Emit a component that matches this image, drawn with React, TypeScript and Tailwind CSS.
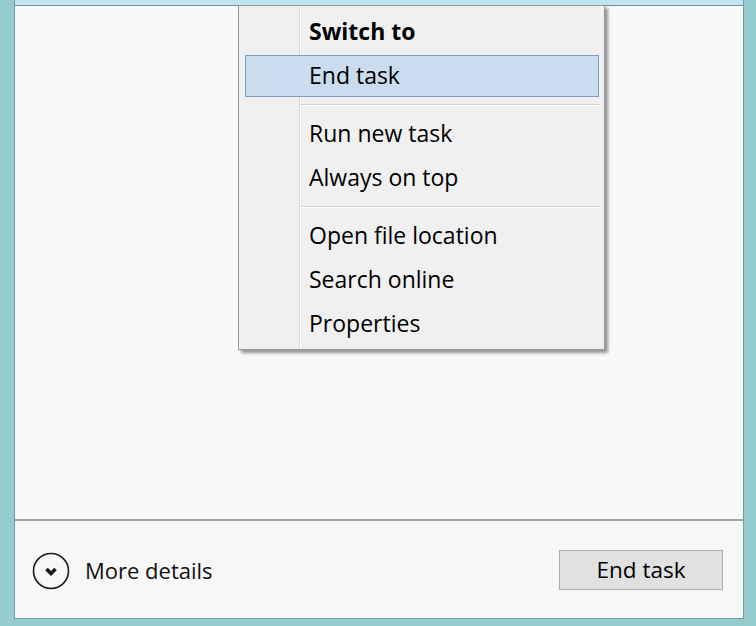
import React from 'react';

const font = { fontFamily: '"Open Sans", "Noto Sans", sans-serif' };

type Item = { label: string; bold?: boolean; active?: boolean } | 'sep';

const menu: Item[] = [
  { label: 'Switch to', bold: true },
  { label: 'End task', active: true },
  'sep',
  { label: 'Run new task' },
  { label: 'Always on top' },
  'sep',
  { label: 'Open file location' },
  { label: 'Search online' },
  { label: 'Properties' },
];

function ContextMenu() {
  return (
    <div className="absolute left-[238px] top-[5px] w-[367px] border border-[#979797] bg-[#f0f0f0] pt-[3px] pb-[4px] shadow-[3px_3px_3px_rgba(0,0,0,0.4)]">
      {/* gutter line */}
      <div className="absolute left-[60px] top-0 bottom-0 w-px bg-[#dadada]" />
      <div className="absolute left-[61px] top-0 bottom-0 w-px bg-white" />
      {menu.map((item, i) =>
        item === 'sep' ? (
          <div key={i} className="h-[14px] pt-[7px] pl-[61px] pr-[4px]">
            <div className="h-px bg-[#d4d4d4]" />
            <div className="h-px bg-white" />
          </div>
        ) : (
          <div key={i} className="relative h-[44px]">
            {item.active && (
              <div className="absolute left-[6px] right-[5px] top-[2px] bottom-0 border border-[#7d9ec2] bg-[#cbdcee]" />
            )}
            <div
              className={`relative flex h-full items-center pl-[70px] text-[23px] text-black ${
                item.bold ? 'font-bold' : ''
              }`}
            >
              {item.label}
            </div>
          </div>
        )
      )}
    </div>
  );
}

export default function App() {
  return (
    <div
      className="relative flex h-[626px] w-[756px] bg-[#95cdcf] pl-[14px] pr-[12px] pb-[7px]"
      style={font}
    >
      <div className="flex flex-1 flex-col border-x border-b border-[#6f9ca2] bg-[#f9f9f9]">
        <div className="h-[5px] bg-[#c2e6ef]" />
        <div className="h-px bg-[#6f93a0]" />
        <div className="flex-1" />
        <div className="h-[2px] bg-[#a3a3a3]" />
        <div className="flex h-[97px] items-center justify-between pl-[17px] pr-[20px] bg-[#f7f7f7]">
          <div className="flex items-center gap-[15px] pt-[2px]">
            <svg width="38" height="38" viewBox="0 0 38 38">
              <circle cx="19" cy="19" r="17.5" fill="none" stroke="#1a1a1a" strokeWidth="1.6" />
              <path d="M14.5 17 L19 21.5 L23.5 17" fill="none" stroke="#1a1a1a" strokeWidth="3.6" strokeLinejoin="miter" />
            </svg>
            <span className="text-[22px] text-[#111]">More details</span>
          </div>
          <button className="flex h-[40px] w-[164px] items-center justify-center border border-[#acacac] bg-[#e1e1e1] text-[22.5px] text-black">
            End task
          </button>
        </div>
      </div>
      <ContextMenu />
    </div>
  );
}
